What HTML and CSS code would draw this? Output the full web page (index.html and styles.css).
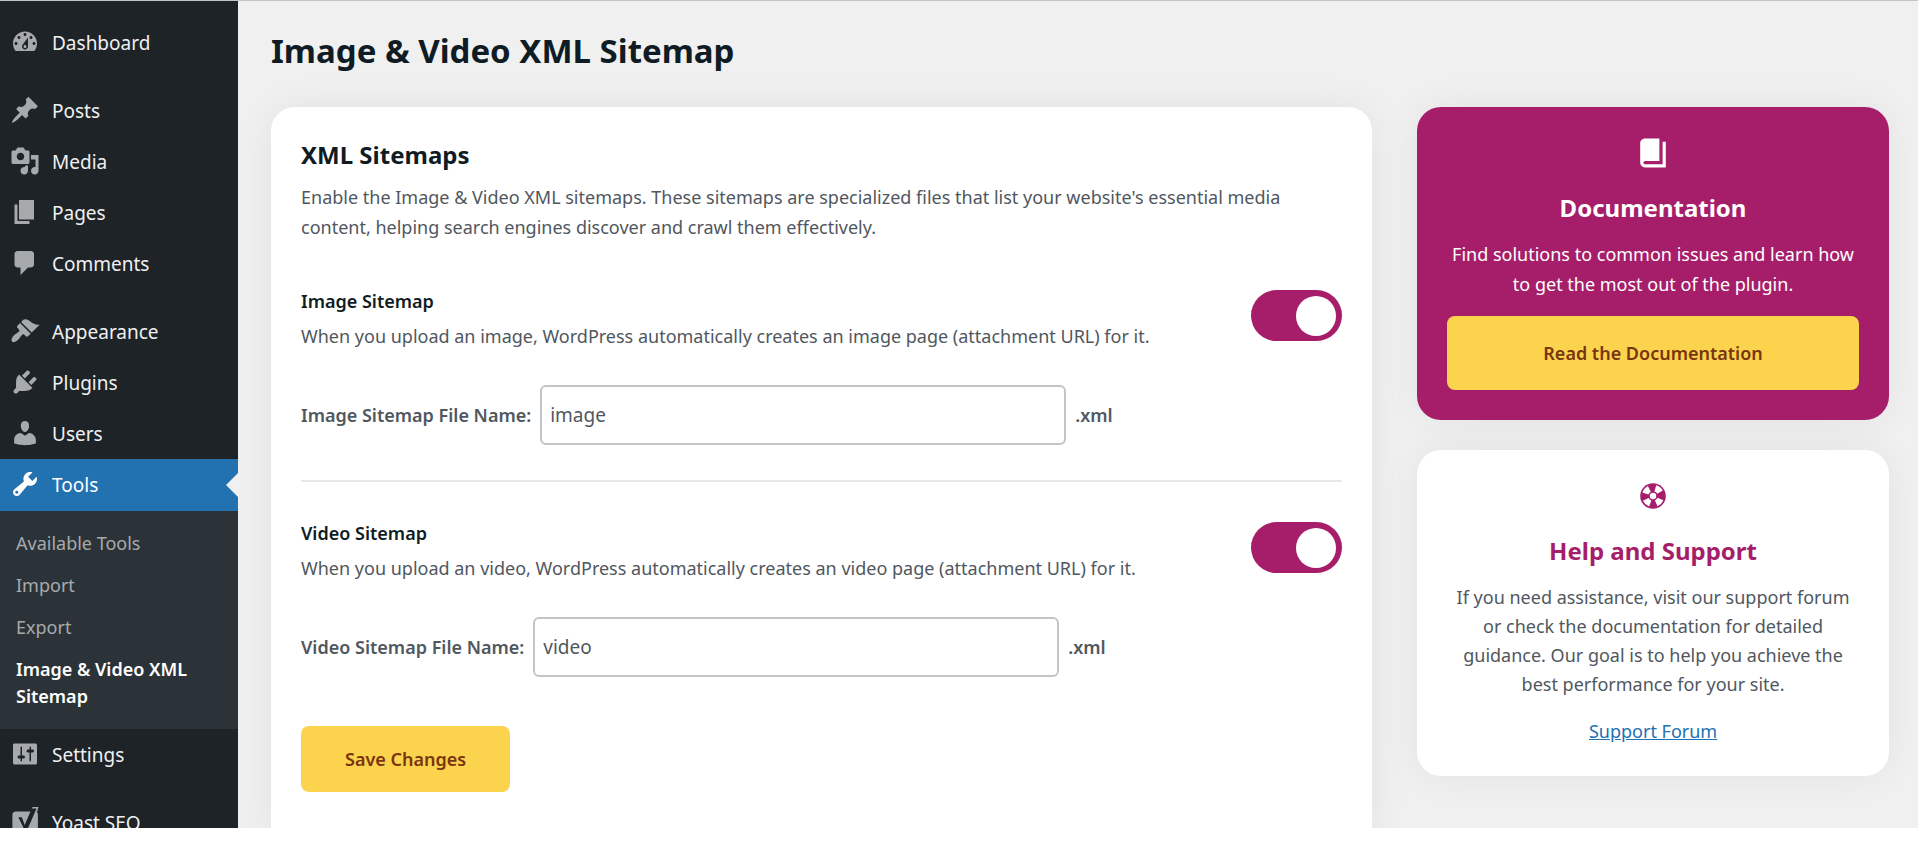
FILE: index.html
```html
<!DOCTYPE html>
<html lang="en">
<head>
  <meta charset="UTF-8">
  <meta name="viewport" content="width=device-width, initial-scale=1">
  <title>Image &amp; Video XML Sitemap</title>
  <link rel="stylesheet" href="styles.css">
</head>
<body>
  <div class="wrap">

    <!-- Admin menu -->
    <nav class="menu">
      <ul class="menu-list">
        <li><a class="menu-item" href="#">
          <svg viewBox="0 0 20 20"><path d="M3.76 16h12.48c1.1-1.37 1.76-3.11 1.76-5 0-4.42-3.58-8-8-8s-8 3.58-8 8c0 1.89.66 3.63 1.76 5zM10 4c.55 0 1 .45 1 1s-.45 1-1 1-1-.45-1-1 .45-1 1-1zM6 6c.55 0 1 .45 1 1s-.45 1-1 1-1-.45-1-1 .45-1 1-1zm8 0c.55 0 1 .45 1 1s-.45 1-1 1-1-.45-1-1 .45-1 1-1zm-5.37 5.55L12 7v6c0 1.1-.9 2-2 2s-2-.9-2-2c0-.57.24-1.08.63-1.45zM4 10c.55 0 1 .45 1 1s-.45 1-1 1-1-.45-1-1 .45-1 1-1zm12 0c.55 0 1 .45 1 1s-.45 1-1 1-1-.45-1-1 .45-1 1-1zm-5 3c0-.55-.45-1-1-1s-1 .45-1 1 .45 1 1 1 1-.45 1-1z"/></svg>
          Dashboard</a></li>
        <li class="separator"></li>
        <li><a class="menu-item" href="#">
          <svg viewBox="0 0 20 20"><path d="M10.44 3.02l1.82-1.82 6.36 6.35-1.83 1.82c-1.05-.68-2.48-.57-3.41.36l-.75.75c-.92.93-1.04 2.35-.35 3.41l-1.83 1.82-2.41-2.41-2.8 2.79c-.42.42-3.38 2.71-3.8 2.29s1.86-3.39 2.28-3.81l2.79-2.79L4.1 9.36l1.83-1.82c1.05.69 2.48.57 3.4-.36l.75-.75c.93-.92 1.05-2.35.36-3.41z"/></svg>
          Posts</a></li>
        <li><a class="menu-item" href="#">
          <svg viewBox="0 0 20 20"><path d="M13 11V4c0-.55-.45-1-1-1h-1.67L9 1H5L3.67 3H2c-.55 0-1 .45-1 1v7c0 .55.45 1 1 1h10c.55 0 1-.45 1-1zM7 4.5c1.38 0 2.5 1.12 2.5 2.5S8.38 9.5 7 9.5 4.5 8.38 4.5 7 5.62 4.5 7 4.5zM14 6h5v10.5c0 1.38-1.12 2.5-2.5 2.5S14 17.88 14 16.5s1.12-2.5 2.5-2.5c.17 0 .34.02.5.05V9h-3V6zm-4 8.05V13h2v3.5c0 1.38-1.12 2.5-2.5 2.5S7 17.88 7 16.5 8.12 14 9.5 14c.17 0 .34.02.5.05z"/></svg>
          Media</a></li>
        <li><a class="menu-item" href="#">
          <svg viewBox="0 0 20 20"><path d="M6 15V2h10v13H6zm-1 1h8v2H3V5h2v11z"/></svg>
          Pages</a></li>
        <li><a class="menu-item" href="#">
          <svg viewBox="0 0 20 20"><path d="M5 2h9c1.1 0 2 .9 2 2v7c0 1.1-.9 2-2 2h-2l-5 5v-5H5c-1.1 0-2-.9-2-2V4c0-1.1.9-2 2-2z"/></svg>
          Comments</a></li>
        <li class="separator"></li>
        <li><a class="menu-item" href="#">
          <svg viewBox="0 0 20 20"><path d="M14.48 11.06L7.41 3.99l1.5-1.5c.5-.56 2.3-.47 3.51.32 1.21.8 1.43 1.28 2.91 2.1 1.18.64 2.45 1.26 4.45.85zm-.71.71L6.7 4.7 4.93 6.47c-.39.39-.39 1.02 0 1.41l1.06 1.06c.39.39.39 1.03 0 1.42-.6.6-1.43 1.11-2.21 1.69-.35.26-.7.53-1.01.84C1.43 14.23.4 16.08 1.4 17.07c.99 1 2.84-.03 4.18-1.36.31-.31.58-.66.85-1.02.57-.78 1.08-1.61 1.69-2.21.39-.39 1.02-.39 1.41 0l1.06 1.06c.39.39 1.02.39 1.41 0z"/></svg>
          Appearance</a></li>
        <li><a class="menu-item" href="#">
          <svg viewBox="0 0 20 20"><path d="M13.11 4.36L9.87 7.6 8 5.73l3.24-3.24c.35-.34 1.05-.2 1.56.32.52.51.66 1.21.31 1.55zm-8 1.77l.91-1.12 9.01 9.01-1.19.84c-.71.71-2.63 1.16-3.82 1.16H6.14L4.9 17.26c-.59.59-1.54.59-2.12 0-.59-.58-.59-1.53 0-2.12l1.24-1.24v-3.88c0-1.13.4-3.19 1.09-3.89zm7.26 3.97l3.24-3.24c.34-.35 1.04-.21 1.55.31.52.51.66 1.21.31 1.55l-3.24 3.25z"/></svg>
          Plugins</a></li>
        <li><a class="menu-item" href="#">
          <svg viewBox="0 0 20 20"><path d="M10 9.25c-2.27 0-2.73-3.44-2.73-3.44C7 4.02 7.82 2 9.97 2c2.16 0 2.98 2.02 2.71 3.81 0 0-.41 3.44-2.68 3.44zm0 2.57L12.72 10c2.39 0 4.52 2.33 4.52 4.53v2.49s-3.65 1.13-7.24 1.13c-3.65 0-7.24-1.13-7.24-1.13v-2.49c0-2.25 1.94-4.48 4.47-4.48z"/></svg>
          Users</a></li>
        <li>
          <a class="menu-item current" href="#">
          <svg viewBox="0 0 20 20"><path d="M16.68 9.77c-1.34 1.34-3.3 1.67-4.95.99l-5.41 6.52c-.99.99-2.59.99-3.58 0s-.99-2.59 0-3.57l6.52-5.42c-.68-1.65-.35-3.61.99-4.95 1.28-1.28 3.12-1.62 4.72-1.06l-2.89 2.89 2.82 2.82 2.86-2.87c.53 1.58.18 3.39-1.08 4.65zM3.81 16.21c.4.39 1.04.39 1.43 0 .4-.4.4-1.04 0-1.43-.39-.4-1.03-.4-1.43 0-.39.39-.39 1.03 0 1.43z"/></svg>
          Tools</a>
          <ul class="submenu">
            <li><a href="#">Available Tools</a></li>
            <li><a href="#">Import</a></li>
            <li><a href="#">Export</a></li>
            <li><a class="active" href="#">Image &amp; Video XML Sitemap</a></li>
          </ul>
        </li>
        <li><a class="menu-item" href="#">
          <svg viewBox="0 0 20 20"><path d="M18 16V4c0-.55-.45-1-1-1H3c-.55 0-1 .45-1 1v12c0 .55.45 1 1 1h14c.55 0 1-.45 1-1zM8 11h1c.55 0 1 .45 1 1s-.45 1-1 1H8v1.5c0 .28-.22.5-.5.5s-.5-.22-.5-.5V13H6c-.55 0-1-.45-1-1s.45-1 1-1h1V5.5c0-.28.22-.5.5-.5s.5.22.5.5V11zm5-2h-1c-.55 0-1-.45-1-1s.45-1 1-1h1V5.5c0-.28.22-.5.5-.5s.5.22.5.5V7h1c.55 0 1 .45 1 1s-.45 1-1 1h-1v5.5c0 .28-.22.5-.5.5s-.5-.22-.5-.5V9z"/></svg>
          Settings</a></li>
        <li class="separator"></li>
        <li><a class="menu-item" href="#">
          <svg viewBox="0 0 20 20"><path d="M4 3h10l1-3h4l-1 3.500c.4.400.6.900.6 1.500v15H1.600V5c0-1.100.9-2 2.400-2z"/><path class="cut" d="M5.500 6.800h2.400l1.900 5.200 4.700-11h3.200l-6.500 15c-.7 1.700-1.700 3-4 3v-2c1.400-.2 2-.9 2-1.900 0-.6-.2-1.100-.5-1.900z"/></svg>
          Yoast SEO</a></li>
      </ul>
    </nav>

    <main class="content">
      <h1>Image &amp; Video XML Sitemap</h1>

      <div class="columns">
        <form class="card settings">
          <h2>XML Sitemaps</h2>
          <p class="intro">Enable the Image &amp; Video XML sitemaps. These sitemaps are specialized files that list your website's essential media content, helping search engines discover and crawl them effectively.</p>

          <!-- Image sitemap -->
          <section class="option">
            <div class="option-head">
              <div>
                <label class="option-title" for="imageToggle">Image Sitemap</label>
                <p>When you upload an image, WordPress automatically creates an image page (attachment URL) for it.</p>
              </div>
              <input type="checkbox" class="toggle" id="imageToggle" checked>
            </div>
            <div class="file-row">
              <label for="imageName">Image Sitemap File Name:</label>
              <input type="text" id="imageName" value="image">
              <span>.xml</span>
            </div>
          </section>

          <!-- Video sitemap -->
          <section class="option">
            <div class="option-head">
              <div>
                <label class="option-title" for="videoToggle">Video Sitemap</label>
                <p>When you upload an video, WordPress automatically creates an video page (attachment URL) for it.</p>
              </div>
              <input type="checkbox" class="toggle" id="videoToggle" checked>
            </div>
            <div class="file-row">
              <label for="videoName">Video Sitemap File Name:</label>
              <input type="text" id="videoName" value="video">
              <span>.xml</span>
            </div>
          </section>

          <button type="submit" class="btn save">Save Changes</button>
        </form>

        <aside class="side">
          <div class="card docs">
            <svg class="card-icon" viewBox="0 0 20 20"><path d="M16 3h2v16H5c-1.660 0-3-1.340-3-3V4c0-1.660 1.340-3 3-3h9v14H5c-.55 0-1 .45-1 1s.45 1 1 1h11V3z"/></svg>
            <h2>Documentation</h2>
            <p>Find solutions to common issues and learn how to get the most out of the plugin.</p>
            <a class="btn" href="#">Read the Documentation</a>
          </div>

          <div class="card help">
            <svg class="card-icon" viewBox="0 0 20 20">
              <circle cx="10" cy="10" r="8"/>
              <circle class="ring" cx="10" cy="10" r="5" pathLength="80"/>
              <circle class="hub" cx="10" cy="10" r="2"/>
            </svg>
            <h2>Help and Support</h2>
            <p>If you need assistance, visit our support forum or check the documentation for detailed guidance. Our goal is to help you achieve the best performance for your site.</p>
            <a href="#">Support Forum</a>
          </div>
        </aside>
      </div>
    </main>
  </div>
</body>
</html>
```
FILE: styles.css
```css
* {
  box-sizing: border-box;
}

body {
  margin: 0;
  background: #fff;
  color: #50575e;
  font-family: "Segoe UI", "Noto Sans", sans-serif;
  font-size: 18px;
  line-height: 30px;
}

h1, h2, p, ul {
  margin: 0;
  padding: 0;
}

ul {
  list-style: none;
}

.wrap {
  display: flex;
  height: calc(100vh - 19px);
  overflow: hidden;
  background: #f0f0f1;
  border-top: 1px solid #c3c4c7;
}

/* Admin menu */
.menu {
  flex: none;
  width: 238px;
  padding-top: 16px;
  background: #1d2327;
}

.menu-item {
  position: relative;
  display: flex;
  align-items: center;
  gap: 12px;
  height: 51px;
  padding-left: 10px;
  color: #f0f0f1;
  font-size: 19px;
  text-decoration: none;
}

.menu-item svg {
  width: 30px;
  height: 30px;
  margin-bottom: 2px;
  fill: #a7aaad;
}

.menu-item .cut {
  fill: #1d2327;
}

.menu-item.current {
  height: 52px;
  background: #2271b1;
  color: #fff;
}

.menu-item.current svg {
  fill: #fff;
}

.menu-item.current::after {
  content: "";
  position: absolute;
  right: 0;
  top: 14px;
  border: 12px solid transparent;
  border-left: 0;
  border-right-color: #f0f0f1;
}

.separator {
  height: 17px;
}

.submenu {
  padding: 11px 0 12px;
  background: #2c3338;
}

.submenu a {
  display: block;
  padding: 8px 16px 7px;
  color: #a7aaad;
  line-height: 27px;
  text-decoration: none;
}

.submenu a.active {
  color: #fff;
  font-weight: 600;
}

/* Page */
.content {
  flex: 1;
  min-width: 0;
  padding: 27px 29px 0 33px;
}

h1 {
  margin-bottom: 33px;
  color: #0f1c24;
  font-size: 33px;
  font-weight: 700;
  line-height: 46px;
}

h2 {
  color: #0f1c24;
  font-size: 24px;
  font-weight: 700;
  line-height: 36px;
}

.columns {
  display: grid;
  grid-template-columns: 7fr 3fr;
  align-items: start;
  gap: 45px;
}

.card {
  padding: 30px;
  background: #fff;
  border-radius: 24px;
  box-shadow: 0 0 40px rgba(0, 0, 0, 0.06);
}

.intro {
  margin: 9px 0 44px;
}

.option + .option {
  margin-top: 35px;
  padding-top: 36px;
  border-top: 2px solid #e8e8e9;
}

.option-head {
  display: flex;
  align-items: flex-start;
  justify-content: space-between;
  gap: 30px;
}

.option-title {
  display: block;
  margin-bottom: 5px;
  color: #0f1c24;
  font-weight: 600;
}

.toggle {
  flex: none;
  appearance: none;
  width: 91px;
  height: 51px;
  margin: 4px 0 0;
  padding: 6px;
  border-radius: 26px;
  background: #c3c4c7;
  cursor: pointer;
}

.toggle::before {
  content: "";
  display: block;
  width: 40px;
  height: 40px;
  border-radius: 50%;
  background: #fff;
}

.toggle:checked {
  background: #a61e69;
}

.toggle:checked::before {
  margin-left: auto;
}

.file-row {
  display: flex;
  align-items: center;
  gap: 9px;
  margin-top: 34px;
  font-weight: 600;
}

.file-row input {
  width: 526px;
  height: 60px;
  padding: 0 8px;
  border: 2px solid #c3c4c7;
  border-radius: 6px;
  background: #fff;
  color: #50575e;
  font-family: inherit;
  font-size: 19px;
}

.btn {
  display: block;
  padding: 22px 44px;
  border: none;
  border-radius: 8px;
  background: #fcd34d;
  color: #78350f;
  font-family: inherit;
  font-size: 18px;
  font-weight: 600;
  line-height: 30px;
  text-align: center;
  text-decoration: none;
  cursor: pointer;
}

.save {
  margin: 49px 0 30px;
  padding: 18px 44px;
}

/* Side cards */
.side {
  display: grid;
  gap: 30px;
}

.side .card {
  text-align: center;
}

.card-icon {
  display: block;
  width: 32px;
  height: 32px;
  margin: 0 auto 21px;
}

.docs {
  background: #a61e69;
  color: #fff;
}

.docs h2 {
  color: #fff;
}

.docs p {
  margin: 13px -6px 17px;
}

.docs .card-icon {
  fill: #fff;
}

.help h2 {
  color: #a61e69;
}

.help p {
  margin: 14px 0 17px;
  line-height: 29px;
}

.help a {
  color: #2271b1;
}

.help .card-icon {
  fill: #a61e69;
}

.help .ring {
  fill: none;
  stroke: #fff;
  stroke-width: 4;
  stroke-dasharray: 10;
  stroke-dashoffset: -5;
}

.help .hub {
  fill: #fff;
}
```
